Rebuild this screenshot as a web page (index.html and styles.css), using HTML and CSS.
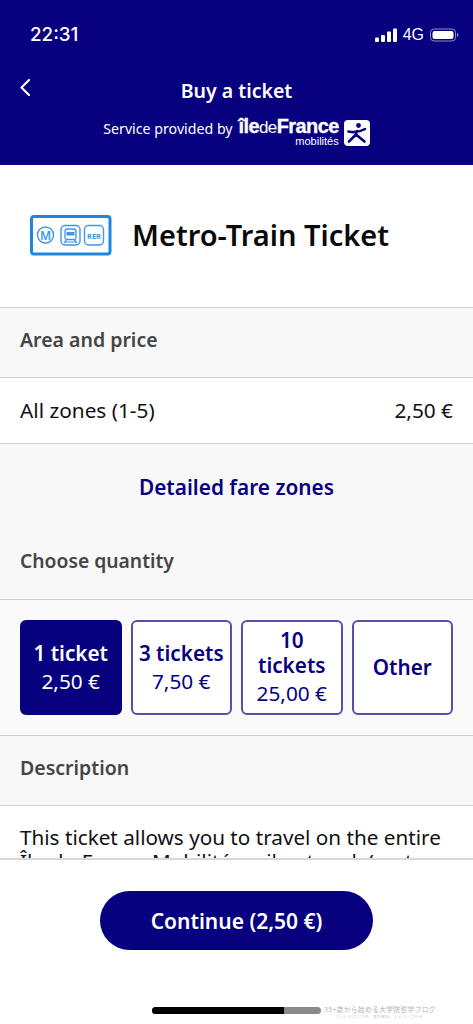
FILE: index.html
```html
<!DOCTYPE html>
<html lang="en">
<head>
<meta charset="utf-8">
<title>Buy a ticket</title>
<link rel="stylesheet" href="styles.css">
</head>
<body>
<div class="app">
  <header class="header">
    <div class="status">
      <span class="time">22:31</span>
      <div class="status-right">
        <svg class="signal" width="22" height="14" viewBox="0 0 22 14"><rect x="0" y="9.5" width="4" height="4.500" rx="1"/><rect x="6" y="7" width="4" height="7" rx="1"/><rect x="12" y="3.500" width="4" height="10.500" rx="1"/><rect x="18" y="0.500" width="4" height="13.500" rx="1"/></svg>
        <span class="net">4G</span>
        <svg class="battery" width="29" height="14" viewBox="0 0 29 14"><rect x="0.500" y="1" width="25" height="12" rx="3.500" fill="none" stroke="#8f8cc6"/><rect x="2.500" y="3" width="21" height="8" rx="2" fill="#fff"/><path d="M27 5v4c.9-.3 1.400-1.100 1.400-2s-.5-1.700-1.400-2z" fill="#8f8cc6"/></svg>
      </div>
    </div>
    <div class="nav">
      <svg class="back" width="12" height="20" viewBox="0 0 12 20"><path d="M10 2 2.500 9.500 10 17" fill="none" stroke="#fff" stroke-width="2.200" stroke-linecap="round" stroke-linejoin="round"/></svg>
      <h1 class="title">Buy a ticket</h1>
    </div>
    <div class="provider">
      <span class="provided">Service provided by</span>
      <div class="idf">
        <div class="idf-name"><b>île</b><span class="de">de</span><b>France</b></div>
        <div class="idf-sub">mobilités</div>
      </div>
      <svg class="idf-icon" width="26" height="26" viewBox="0 0 26 26"><rect width="26" height="26" rx="4" fill="#fff"/><circle cx="14.500" cy="5.500" r="2.400" fill="#07007f"/><path d="M4.500 11.500c5 1.200 11.500.4 16.500-2.500M13 11l-1 3.500L5 21.500M12 14.500l8.500 7" fill="none" stroke="#07007f" stroke-width="2.600" stroke-linecap="round"/></svg>
    </div>
  </header>

  <main class="scroll">
    <section class="product">
      <svg class="product-icon" width="82" height="41" viewBox="0 0 82 41">
        <rect x="1.500" y="1.500" width="78.500" height="37.500" rx="2.500" fill="#fff" stroke="#1f86e0" stroke-width="3"/>
        <circle cx="15.500" cy="20" r="8" fill="none" stroke="#3f97e6" stroke-width="1.400"/>
        <text x="15.500" y="24.500" class="icon-m">M</text>
        <rect x="31" y="10.500" width="19" height="19.500" rx="4" fill="none" stroke="#3f97e6" stroke-width="1.400"/>
        <path d="M37.500 14h6a2.500 2.500 0 0 1 2.500 2.500v6.500a1.500 1.500 0 0 1-1.500 1.500h-8a1.500 1.500 0 0 1-1.500-1.500v-6.500a2.500 2.500 0 0 1 2.500-2.500z" fill="none" stroke="#3f97e6" stroke-width="1.300"/>
        <rect x="36.500" y="17" width="8" height="3.500" fill="#3f97e6"/>
        <path d="M36.500 25l-2.500 3M44.500 25l2.500 3M35 27h11" stroke="#3f97e6" stroke-width="1.200" fill="none"/>
        <rect x="54.500" y="10.500" width="19" height="19.500" rx="4" fill="none" stroke="#3f97e6" stroke-width="1.400"/>
        <text x="64" y="23.500" class="icon-rer">RER</text>
      </svg>
      <h2 class="product-name">Metro-Train Ticket</h2>
    </section>

    <div class="section-head area">Area and price</div>
    <div class="price-row"><span>All zones (1-5)</span><span>2,50 €</span></div>

    <div class="grey-block">
      <a class="fare-link">Detailed fare zones</a>
      <div class="choose">Choose quantity</div>
    </div>

    <div class="options">
      <button class="option selected"><b>1 ticket</b><span>2,50 €</span></button>
      <button class="option"><b>3 tickets</b><span>7,50 €</span></button>
      <button class="option"><b>10 tickets</b><span>25,00 €</span></button>
      <button class="option"><b>Other</b></button>
    </div>

    <div class="section-head desc-head">Description</div>
    <p class="desc">This ticket allows you to travel on the entire Île-de-France Mobilités rail network (metro, RER and train) in all zones.</p>
  </main>

  <footer class="footer">
    <button class="continue">Continue (2,50 €)</button>
    <div class="home-row">
      <div class="home-bar"><div class="home-fill"></div></div>
      <div class="mark">
        <div class="mark-main">35+歳から始める大学院哲学ブログ</div>
        <div class="mark-sub">ペンシルボニア州、東京都出、ジャネーブ行き</div>
      </div>
    </div>
  </footer>
</div>
</body>
</html>
```

FILE: styles.css
```css
* { box-sizing: border-box; }
html, body { margin: 0; padding: 0; background: #fff; }
body { font-family: "Noto Sans", "Noto Sans CJK JP", sans-serif; color: #111; }
.app { width: 473px; height: 1024px; display: flex; flex-direction: column; overflow: hidden; }

.header { height: 165px; flex: none; background: #07007f; color: #fff; }
.status { height: 68px; padding: 23px 14px 0 30px; display: flex; justify-content: space-between; align-items: flex-start; }
.time { font: 500 18.800px/24px Inter, "Liberation Sans", sans-serif; }
.status-right { display: flex; align-items: center; gap: 6px; height: 24px; }
.signal { fill: #fff; }
.net { font: 400 16px/24px "Liberation Sans", sans-serif; }
.nav { position: relative; height: 44px; display: flex; align-items: center; justify-content: center; }
.back { position: absolute; left: 19px; top: 10px; }
.title { margin: 2px 0 0; font-size: 19.500px; line-height: 24px; font-weight: 600; }
.provider { display: flex; align-items: center; justify-content: center; gap: 6px; margin-top: 6px; }
.provided { font-size: 14.200px; line-height: 14px; margin-bottom: 8px; }
.idf { display: flex; flex-direction: column; align-items: flex-end; font-family: "Liberation Sans", sans-serif; }
.idf-name { font-size: 20px; line-height: 16px; letter-spacing: -.6px; white-space: nowrap; -webkit-text-stroke: .3px #fff; }
.de { font-weight: 400; font-size: 17px; -webkit-text-stroke: 0; }
.idf-sub { font-size: 11px; line-height: 11px; }
.idf-icon { margin-left: -1px; }

.scroll { flex: 1; min-height: 0; overflow: hidden; border-bottom: 2px solid #d8d8d8; }
.product { height: 143px; display: flex; align-items: center; gap: 20px; padding: 0 0 2px 30px; border-bottom: 1px solid #cfcfcf; background: #fff; }
.product-icon { flex: none; }
.icon-m { font: 600 12px "Noto Sans", sans-serif; fill: #3f97e6; text-anchor: middle; }
.icon-rer { font: 700 7.500px "Noto Sans", sans-serif; fill: #3f97e6; text-anchor: middle; }
.product-name { margin: 0; font-size: 29px; line-height: 36px; font-weight: 600; color: #0a0a0a; }

.section-head { height: 70px; padding: 0 20px; display: flex; align-items: center; background: #f8f8f8; border-bottom: 1px solid #cfcfcf; font-size: 19.500px; font-weight: 600; color: #454545; }
.area { padding-bottom: 6px; }
.price-row { height: 66px; padding: 0 20px 2px; display: flex; align-items: center; justify-content: space-between; background: #fff; border-bottom: 1px solid #cfcfcf; font-size: 20.800px; color: #111; }

.grey-block { height: 156px; background: #f8f8f8; border-bottom: 1px solid #cfcfcf; padding: 28px 20px 0; display: flex; flex-direction: column; }
.fare-link { text-align: center; font-size: 20.800px; line-height: 30px; font-weight: 600; color: #07007f; }
.choose { margin-top: 46px; font-size: 19.300px; line-height: 26px; font-weight: 600; color: #454545; }

.options { height: 136px; padding: 20px; display: grid; grid-template-columns: repeat(4, 1fr); gap: 9px; background: #fafafa; border-bottom: 1px solid #cfcfcf; }
.option { padding: 0 2px; border: 2px solid #5550b0; border-radius: 6px; background: #fff; color: #07007f; font-family: inherit; display: flex; flex-direction: column; align-items: center; justify-content: center; gap: 2px; text-align: center; min-width: 0; }
.option b { font-size: 20.700px; line-height: 25px; font-weight: 600; }
.option span { font-size: 20.800px; line-height: 27px; font-weight: 400; }
.option.selected { background: #07007f; border-color: #07007f; color: #fff; }

.desc-head { padding-bottom: 6px; }
.desc { margin: 0; padding: 19px 20px 0; font-size: 20.700px; line-height: 24px; background: #fff; color: #111; height: 400px; }

.footer { height: 164px; flex: none; background: #fff; display: flex; flex-direction: column; align-items: center; padding-top: 31px; }
.continue { width: 273px; height: 59px; flex: none; border: 0; border-radius: 30px; background: #07007f; color: #fff; font-family: inherit; font-size: 21px; font-weight: 600; }
.home-row { position: relative; width: 169px; margin-top: 57px; }
.home-bar { height: 7px; border-radius: 3.500px; background: #8a8a8a; overflow: hidden; }
.home-fill { width: 132px; height: 7px; background: #000; }
.mark { position: absolute; left: 172px; top: -2px; width: 110px; color: #b5b5b5; white-space: nowrap; }
.mark-main { font-size: 6.800px; line-height: 9px; letter-spacing: .3px; }
.mark-sub { font-size: 3.800px; line-height: 5px; letter-spacing: .4px; text-align: center; color: #c8c8c8; }
```
